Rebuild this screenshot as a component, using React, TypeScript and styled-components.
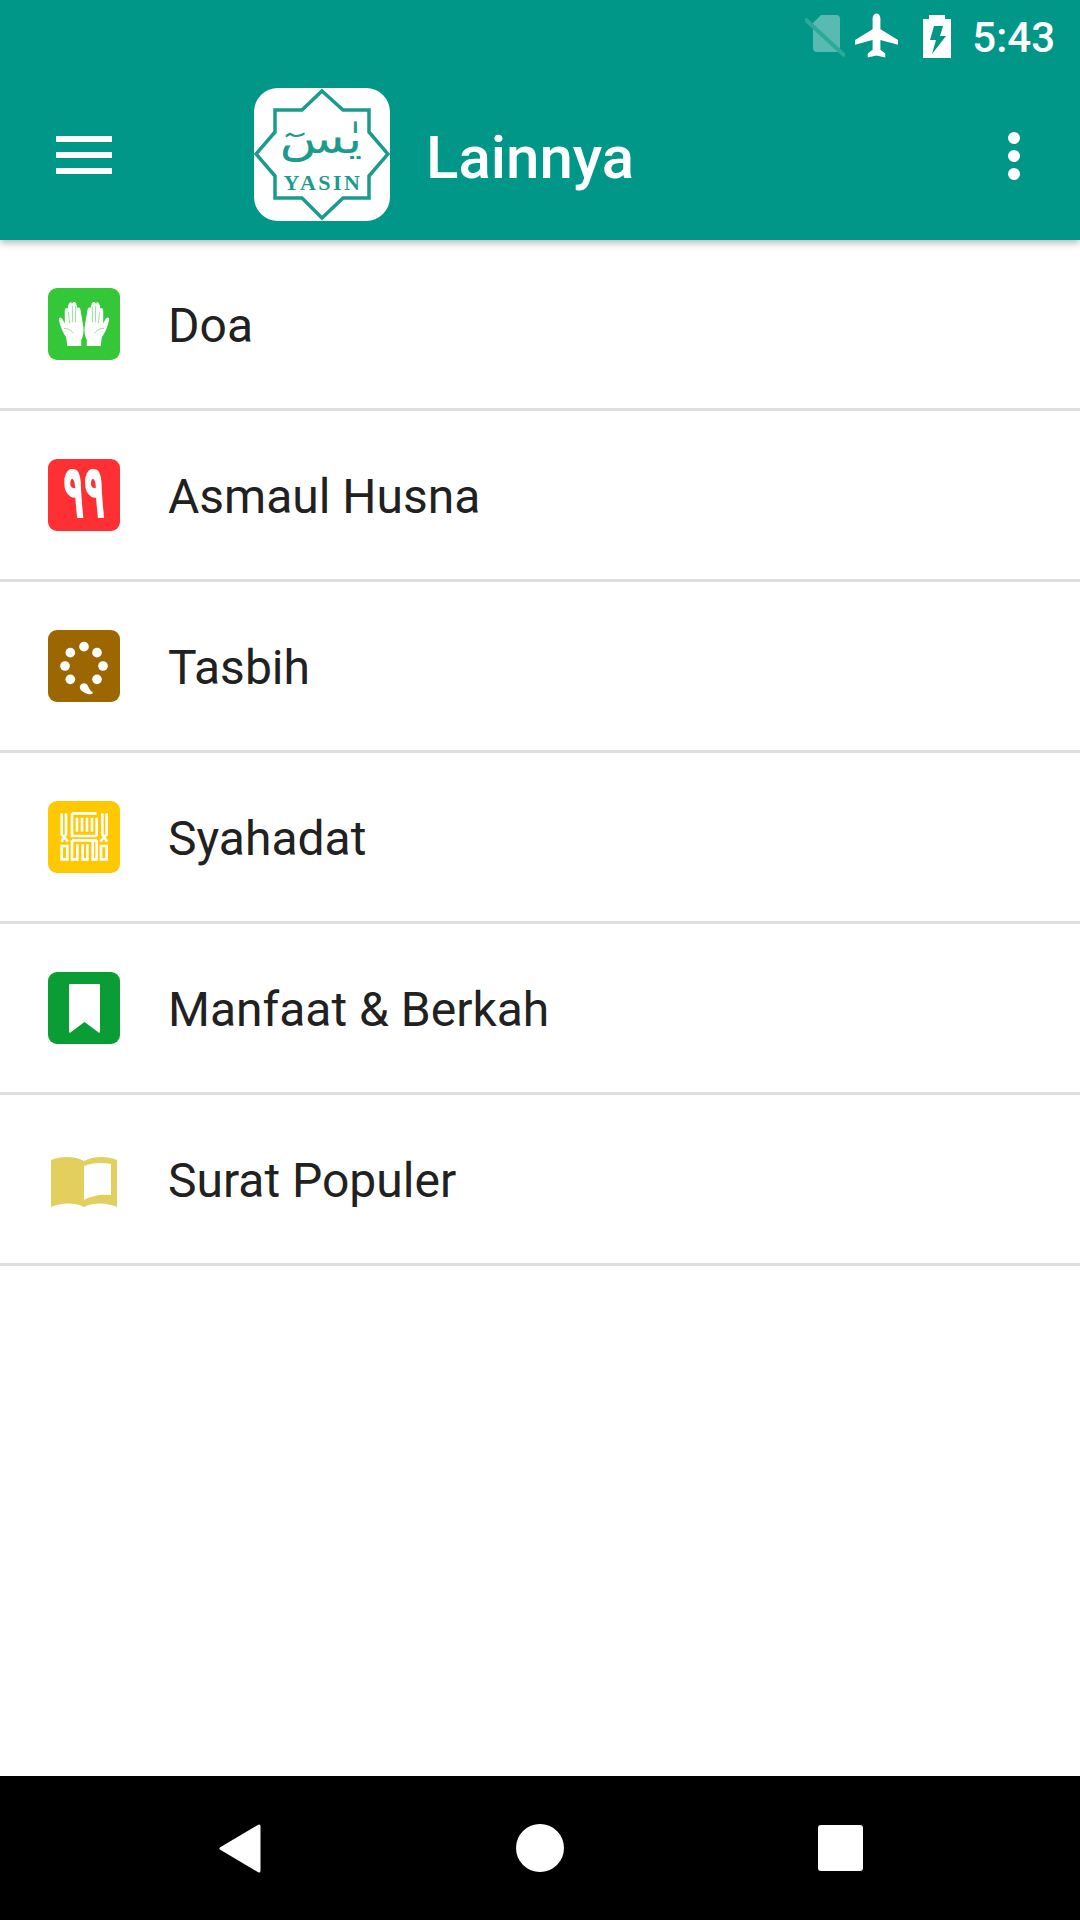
import React from 'react'
import styled, { createGlobalStyle } from 'styled-components'

const Global = createGlobalStyle`
html,body{margin:0;padding:0;background:#fff;}
#root{height:1920px;}
`

const Page = styled.div`
width:1080px;
height:1920px;
display:flex;
flex-direction:column;
overflow:hidden;
background:#fff;
font-family:Roboto,"Liberation Sans",sans-serif;
`

const Header = styled.header`
height:240px;
flex:none;
background:#009688;
display:flex;
flex-direction:column;
box-shadow:0 3px 7px rgba(0,0,0,.28);
position:relative;
z-index:1;
`

const StatusBar = styled.div`
height:72px;
display:flex;
align-items:center;
justify-content:flex-end;
padding-right:25px;
color:#fff;
`

const Clock = styled.span`
font-size:42px;
font-weight:500;
margin-left:21px;
padding-top:2px;
`

const Toolbar = styled.div`
height:168px;
display:flex;
align-items:center;
padding:0 60px 0 56px;
`

const LogoBox = styled.div`
width:136px;
height:133px;
margin:0 0 3px 142px;
flex:none;
`

const Title = styled.h1`
margin:0 0 0 36px;
padding-top:2px;
flex:1;
font-size:60px;
font-weight:500;
color:#fff;
`

const List = styled.ul`
list-style:none;
margin:0;
padding:0;
flex:1;
`

const Row = styled.li`
height:168px;
border-bottom:3px solid #dedede;
display:flex;
align-items:center;
padding-left:48px;
`

const IconBox = styled.div<{ $bg: string }>`
width:72px;
height:72px;
flex:none;
border-radius:9px;
background:${(p) => p.$bg};
`

const Label = styled.span`
margin-left:48px;
padding-top:2px;
font-size:48px;
color:#212121;
`

const NavBar = styled.nav`
height:144px;
flex:none;
background:#000;
display:flex;
align-items:center;
justify-content:space-between;
padding:0 217px 0 219px;
`

const IconArt = styled.svg`
display:block;
width:72px;
height:72px;
overflow:visible;
`

const Hand = () => (
  <>
    <path
      d="M25 124L22 100C14 90 5 70 1 50C1 44 6 44 9 50L18 68V25C18 17 25 17 26 24L28 10C29 0 38 0 38 8L40 4C41 0 48 0 48 6L52 20C56 14 60 18 60 24L68 70C70 85 66 100 62 108V124Z"
      stroke="#fff"
      strokeWidth="3"
    />
    <path d="M27 28L30 60M38 10L39 58M48 12L47 58M14 76C24 74 34 80 40 88" fill="none" stroke="#34c839" strokeWidth="1.500" />
  </>
)

const Hands = () => (
  <IconArt viewBox="0 0 216 216" fill="#fff">
    <g transform="translate(33 42) scale(1.05)">
      <Hand />
    </g>
    <g transform="translate(183 42) scale(-1.05 1.05)">
      <Hand />
    </g>
  </IconArt>
)

const NinetyNine = () => (
  <IconArt viewBox="0 0 216 216">
    <text
      transform="translate(108 177) scale(.6 1.36)"
      textAnchor="middle"
      fontFamily="'DejaVu Sans',sans-serif"
      fontWeight="700"
      fontSize="170"
      fill="#fff"
    >
      ٩٩
    </text>
  </IconArt>
)

const Beads = () => (
  <IconArt viewBox="0 0 216 216" fill="#fff">
    <circle cx="108" cy="50" r="14.500" />
    <circle cx="67" cy="68" r="14.500" />
    <circle cx="147" cy="68" r="14.500" />
    <circle cx="51" cy="108" r="14.500" />
    <circle cx="165" cy="108" r="14.500" />
    <circle cx="67" cy="148" r="14.500" />
    <circle cx="147" cy="148" r="14.500" />
    <path d="M96 168C100 158 115 156 120 168C124 178 128 184 134 186C136 192 128 194 120 192C108 188 92 180 96 168Z" />
  </IconArt>
)

const Kufic = () => (
  <IconArt viewBox="0 0 216 216" fill="none" stroke="#fff" strokeWidth="8">
    <path d="M41 37V100L60 122M54 37V100L40 122M41 135H58V175H41Z" />
    <path d="M176 37V100L157 122M163 37V100L177 122M159 135H176V175H159Z" />
    <path d="M72 37H146M72 37V105H146M87 50V92M102 50V92M117 50V92M132 50V92M146 50V105" />
    <path d="M72 118H146M72 118V175H88V130M104 130V175H118V130M134 118V175H146V118" />
  </IconArt>
)

const Bookmark = () => (
  <IconArt viewBox="0 0 72 72" fill="#fff">
    <path d="M21 13a1 1 0 0 1 1-1h29a1 1 0 0 1 1 1v46a1 1 0 0 1-2 1L36.500 50 23 60a1 1 0 0 1-2-1Z" />
  </IconArt>
)

const OpenBook = () => (
  <IconArt viewBox="-3 -13 72 72">
    <path d="M0 4C10 0 24 0 33 5C42 0 56 0 66 4V51C56 47 44 46 33 51C22 46 10 47 0 51Z" fill="#e2cf5d" />
    <path d="M33 10C40 7 50 6 60 8V39C50 38 40 40 33 44Z" fill="#fff" />
  </IconArt>
)

const rows = [
  { label: 'Doa', bg: '#34c839', icon: <Hands /> },
  { label: 'Asmaul Husna', bg: '#ff3033', icon: <NinetyNine /> },
  { label: 'Tasbih', bg: '#9c6700', icon: <Beads /> },
  { label: 'Syahadat', bg: '#ffc800', icon: <Kufic /> },
  { label: 'Manfaat & Berkah', bg: '#0a9c35', icon: <Bookmark /> },
  { label: 'Surat Populer', bg: 'transparent', icon: <OpenBook /> },
]

const Logo = () => (
  <svg width="136" height="133" viewBox="0 0 136 133" style={{ display: 'block' }}>
    <rect width="136" height="133" rx="24" fill="#fff" />
    <path
      d="M68 3L89 22H115V44L134 66L115 88V110H89L68 130L48 110H21V88L2 66L21 44V22H48Z"
      fill="none"
      stroke="#1b9b8e"
      strokeWidth="3.500"
    />
    <text
      transform="translate(67 65) scale(.92 .7)"
      textAnchor="middle"
      fontFamily="'DejaVu Sans',sans-serif"
      fontSize="58"
      fill="#1b9b8e"
    >
      يٰسٓ
    </text>
    <text
      x="69"
      y="102"
      textAnchor="middle"
      fontFamily="'Liberation Serif',serif"
      fontWeight="700"
      fontSize="22"
      letterSpacing="2.500"
      fill="#1b9b8e"
    >
      YASIN
    </text>
  </svg>
)

export default function App() {
  return (
    <Page>
      <Global />
      <Header>
        <StatusBar>
          <svg width="40" height="42" viewBox="0 0 40 42">
            <path d="M8 8L16 0H31a4 4 0 0 1 4 4V37H12a4 4 0 0 1-4-4Z" fill="#fff" opacity=".35" />
            <path d="M0 4L40 41" stroke="#2da99c" strokeWidth="4" />
          </svg>
          <svg width="43" height="46" viewBox="0 0 44 46" fill="#fff" style={{ marginLeft: 10 }}>
            <path d="M22 0c-2 0-4 2-4 5v11L0 27v5l18-5v10l-5 4v4l9-2 9 2v-4l-5-4V27l18 5v-5L26 16V5c0-3-2-5-4-5Z" />
          </svg>
          <svg width="28" height="43" viewBox="0 0 28 43" style={{ marginLeft: 25 }}>
            <path d="M6 0h16v4h6v39H0V4h6Z" fill="#fff" />
            <path d="M11 11h9l-3 10h6L9 39l4-14H7Z" fill="#009688" />
          </svg>
          <Clock>5:43</Clock>
        </StatusBar>
        <Toolbar>
          <svg width="56" height="40" viewBox="0 0 56 40" fill="#fff">
            <rect width="56" height="6" />
            <rect y="16" width="56" height="6" />
            <rect y="32" width="56" height="6" />
          </svg>
          <LogoBox>
            <Logo />
          </LogoBox>
          <Title>Lainnya</Title>
          <svg width="12" height="48" viewBox="0 0 12 48" fill="#fff">
            <circle cx="6" cy="6" r="6" />
            <circle cx="6" cy="24" r="6" />
            <circle cx="6" cy="42" r="6" />
          </svg>
        </Toolbar>
      </Header>
      <List>
        {rows.map((r) => (
          <Row key={r.label}>
            <IconBox $bg={r.bg}>{r.icon}</IconBox>
            <Label>{r.label}</Label>
          </Row>
        ))}
      </List>
      <NavBar>
        <svg width="42" height="49" viewBox="0 0 42 49" fill="#fff">
          <path d="M40 2V47L2 24.500Z" stroke="#fff" strokeWidth="3" strokeLinejoin="round" />
        </svg>
        <svg width="48" height="48" viewBox="0 0 48 48" fill="#fff">
          <circle cx="24" cy="24" r="24" />
        </svg>
        <svg width="45" height="46" viewBox="0 0 45 46" fill="#fff">
          <rect width="45" height="46" rx="3" />
        </svg>
      </NavBar>
    </Page>
  )
}
